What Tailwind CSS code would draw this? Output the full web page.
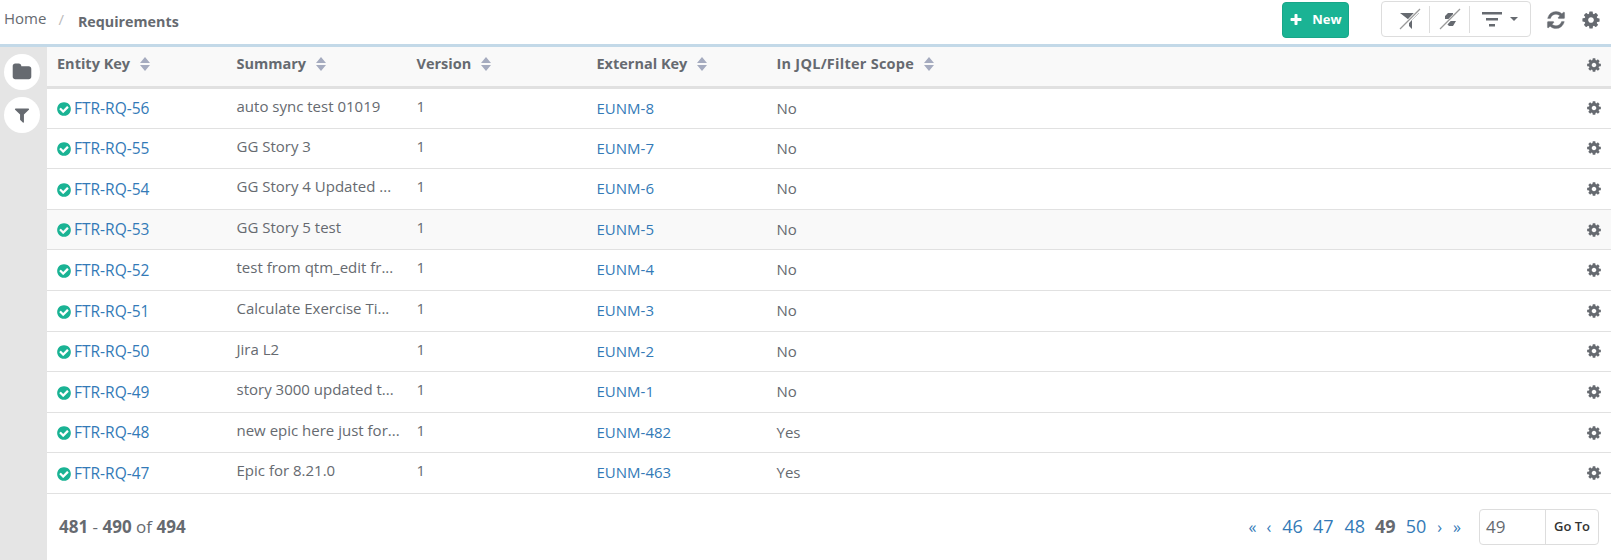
<!DOCTYPE html>
<html lang="en">
<head>
  <meta charset="UTF-8" />
  <title>Requirements</title>
  <script src="https://cdn.jsdelivr.net/npm/@tailwindcss/browser@4"></script>
</head>
<body class="bg-white font-['Open_Sans',sans-serif] text-[#666a70] h-[560px] w-[1619px] overflow-hidden">

  <!-- Breadcrumb + toolbar -->
  <div class="h-[44px] mr-2 flex items-center">
    <span class="ml-1 -mt-[7px] text-[15px]">Home</span>
    <span class="ml-3 -mt-[6px] text-[15px] text-[#bbb]">/</span>
    <span class="ml-[14px] -mt-[1px] text-[14.300px] font-bold">Requirements</span>

    <button class="ml-auto h-9 w-[67px] -mt-[4px] rounded bg-[#1ab394] border border-[#18a689] text-white text-[13px] font-bold flex items-center justify-center gap-[9px]">
      <svg class="w-[14px] h-[14px]" viewBox="0 0 1792 1792" fill="currentColor"><path d="M1600 736v192q0 40-28 68t-68 28h-416v416q0 40-28 68t-68 28h-192q-40 0-68-28t-28-68v-416h-416q-40 0-68-28t-28-68v-192q0-40 28-68t68-28h416v-416q0-40 28-68t68-28h192q40 0 68 28t28 68v416h416q40 0 68 28t28 68z"/></svg>
      New
    </button>

    <div class="ml-8 -mt-[6px] h-[36px] w-[150px] border border-[#ddd] rounded flex items-center">
      <div class="w-[48px] flex justify-end pr-[8px] border-r border-[#ddd] h-[27px] items-center">
        <svg class="w-[22px] h-[22px]" viewBox="0 0 22 22"><path d="M1 5h19l-7 7v9l-3-3v-6z" fill="#666a70"/><path d="M2 21L21 1" stroke="#fff" stroke-width="3.500"/><path d="M1 21L21 1" stroke="#999" stroke-width="1.200"/></svg>
      </div>
      <div class="w-[40px] flex justify-center border-r border-[#ddd] h-[27px] items-center">
        <svg class="w-[22px] h-[22px]" viewBox="0 0 22 22"><path d="M6 8l3-3h5v3l-2 3h-6zM8 13h9l-3 5h-4l-2-2z" fill="#666a70"/><path d="M2 21L21 1" stroke="#fff" stroke-width="3"/><path d="M1 21L21 1" stroke="#999" stroke-width="1.200"/></svg>
      </div>
      <div class="flex-1 flex items-center justify-center gap-2">
        <svg class="w-5 h-[15px]" viewBox="0 0 20 15" fill="#666a70"><path d="M0 0h20v2.500h-20zM4 6h12v2.500h-12zM7 12h6v2.500h-6z"/></svg>
        <span class="w-0 h-0 border-x-[4px] border-x-transparent border-t-[4px] border-t-[#666a70]"></span>
      </div>
    </div>

    <svg class="ml-[15px] -mt-[4px] w-[20px] h-[20px]" viewBox="0 0 1792 1792" fill="#666a70" stroke="#666a70" stroke-width="30"><path d="M1639 1056q0 5-1 7-64 268-268 434.500t-478 166.500q-146 0-282.500-55t-243.500-157l-129 129q-19 19-45 19t-45-19-19-45v-448q0-26 19-45t45-19h448q26 0 45 19t19 45-19 45l-137 137q71 66 161 102t187 36q134 0 250-65t186-179q11-17 53-117 8-23 30-23h192q13 0 22.500 9.500t9.500 22.500zm25-800v448q0 26-19 45t-45 19h-448q-26 0-45-19t-19-45 19-45l138-138q-148-137-349-137-134 0-250 65t-186 179q-11 17-53 117-8 23-30 23h-199q-13 0-22.500-9.500t-9.500-22.500v-7q65-268 270-434.500t480-166.500q146 0 284 55.500t245 156.500l130-129q19-19 45-19t45 19 19 45z"/></svg>
    <svg class="ml-[15px] mr-[10px] -mt-[4px] w-[20px] h-[20px]" viewBox="0 0 1792 1792" fill="#666a70"><path d="M1152 896q0-106-75-181t-181-75-181 75-75 181 75 181 181 75 181-75 75-181zm512-109v222q0 12-8 23t-20 13l-185 28q-19 54-39 91 35 50 107 138 10 12 10 25t-9 23q-27 37-99 108t-94 71q-12 0-26-9l-138-108q-44 23-91 38-16 136-29 186-7 28-36 28h-222q-14 0-24.500-8.500t-11.500-21.500l-28-184q-49-16-90-37l-141 107q-10 9-25 9-14 0-25-11-126-114-165-168-7-10-7-23 0-12 8-23 15-21 51-66.500t54-70.500q-27-50-41-99l-183-27q-13-2-21-12.500t-8-23.500v-222q0-12 8-23t19-13l186-28q14-46 39-92-40-57-107-138-10-12-10-24 0-10 9-23 26-36 98.500-107.500t94.500-71.500q13 0 26 10l138 107q44-23 91-38 16-136 29-186 7-28 36-28h222q14 0 24.500 8.500t11.500 21.500l28 184q49 16 90 37l142-107q9-9 24-9 13 0 25 10 129 119 165 170 7 8 7 22 0 12-8 23-15 21-51 66.500t-54 70.500q26 50 41 98l183 28q13 2 21 12.500t8 23.500z"/></svg>
  </div>

  <div class="h-[3px] mr-2 bg-[#c3d9e8]"></div>

  <div class="flex mr-2 h-[513px]">
    <!-- Side rail -->
    <div class="w-[47px] shrink-0 bg-[#e5e5e5] flex flex-col items-center pt-[7px] pr-[3px] gap-[7px]">
      <div class="w-9 h-9 rounded-full bg-white flex items-center justify-center">
        <svg class="w-[20px] h-[20px]" viewBox="0 0 1792 1792" fill="#666a70"><path d="M1728 608v704q0 92-66 158t-158 66h-1216q-92 0-158-66t-66-158v-960q0-92 66-158t158-66h320q92 0 158 66t66 158v32h672q92 0 158 66t66 158z"/></svg>
      </div>
      <div class="w-9 h-9 rounded-full bg-white flex items-center justify-center">
        <svg class="w-[18px] h-[18px]" viewBox="0 0 1792 1792" fill="#666a70"><path d="M1595 295q17 41-14 70l-493 493v742q0 42-39 59-13 5-25 5-27 0-45-19l-256-256q-19-19-19-45v-486l-493-493q-31-29-14-70 17-39 59-39h1280q42 0 59 39z"/></svg>
      </div>
    </div>

    <div class="flex-1 min-w-0">
      <table class="w-full table-fixed border-collapse text-[15px]">
        <thead>
          <tr class="h-[40.500px] bg-[#f9f9f9] border-b-[3px] border-[#e1e1e1] text-left text-[14.500px] font-bold">
            <th class="w-[179.500px] pl-[10px] pb-[5px] font-bold">Entity Key<svg class="inline ml-[10px] w-[10px] h-[14px] align-[-2px]" viewBox="0 0 10 14" fill="#a5abbf"><path d="M5 0l5 6h-10zM5 14l-5-6h10z"/></svg></th>
            <th class="w-[180px] pl-[10px] pb-[5px] font-bold">Summary<svg class="inline ml-[10px] w-[10px] h-[14px] align-[-2px]" viewBox="0 0 10 14" fill="#a5abbf"><path d="M5 0l5 6h-10zM5 14l-5-6h10z"/></svg></th>
            <th class="w-[180px] pl-[10px] pb-[5px] font-bold">Version<svg class="inline ml-[10px] w-[10px] h-[14px] align-[-2px]" viewBox="0 0 10 14" fill="#a5abbf"><path d="M5 0l5 6h-10zM5 14l-5-6h10z"/></svg></th>
            <th class="w-[180px] pl-[10px] pb-[5px] font-bold">External Key<svg class="inline ml-[10px] w-[10px] h-[14px] align-[-2px]" viewBox="0 0 10 14" fill="#a5abbf"><path d="M5 0l5 6h-10zM5 14l-5-6h10z"/></svg></th>
            <th class="pl-[10px] pb-[5px] font-bold tracking-[0.25px]">In JQL/Filter Scope<svg class="inline ml-[10px] w-[10px] h-[14px] align-[-2px]" viewBox="0 0 10 14" fill="#a5abbf"><path d="M5 0l5 6h-10zM5 14l-5-6h10z"/></svg></th>
            <th class="w-[36px] pl-[11px] pb-[3px]"><svg class="w-[16px] h-[16px]" viewBox="0 0 1792 1792" fill="#666a70"><path d="M1152 896q0-106-75-181t-181-75-181 75-75 181 75 181 181 75 181-75 75-181zm512-109v222q0 12-8 23t-20 13l-185 28q-19 54-39 91 35 50 107 138 10 12 10 25t-9 23q-27 37-99 108t-94 71q-12 0-26-9l-138-108q-44 23-91 38-16 136-29 186-7 28-36 28h-222q-14 0-24.500-8.500t-11.500-21.500l-28-184q-49-16-90-37l-141 107q-10 9-25 9-14 0-25-11-126-114-165-168-7-10-7-23 0-12 8-23 15-21 51-66.500t54-70.500q-27-50-41-99l-183-27q-13-2-21-12.500t-8-23.500v-222q0-12 8-23t19-13l186-28q14-46 39-92-40-57-107-138-10-12-10-24 0-10 9-23 26-36 98.500-107.500t94.500-71.500q13 0 26 10l138 107q44-23 91-38 16-136 29-186 7-28 36-28h222q14 0 24.500 8.500t11.500 21.500l28 184q49 16 90 37l142-107q9-9 24-9 13 0 25 10 129 119 165 170 7 8 7 22 0 12-8 23-15 21-51 66.500t-54 70.500q26 50 41 98l183 28q13 2 21 12.500t8 23.500z"/></svg></th>
          </tr>
        </thead>
        <tbody id="rows"></tbody>
      </table>

      <!-- Pager -->
      <div class="h-[66px] flex items-center pl-3 pr-[12px]">
        <div class="text-[17px] -mt-[1px]"><b>481</b> - <b>490</b> of <b>494</b></div>
        <div class="ml-auto flex items-center text-[18px] text-[#337ab7]">
          <a class="text-[16px] mr-[10px]">«</a>
          <a class="text-[16px] mr-[11px]">‹</a>
          <a class="mr-[10px]">46</a>
          <a class="mr-[11px]">47</a>
          <a class="mr-[10px]">48</a>
          <b class="mr-[10px] text-[#666a70]">49</b>
          <a class="mr-[11px]">50</a>
          <a class="text-[16px] mr-[11px]">›</a>
          <a class="text-[16px]">»</a>
          <div class="ml-[18px] w-[120px] h-[36px] border border-[#ddd] rounded flex items-center text-[#666a70]">
            <span class="w-[66px] pl-[6px] text-[17px] border-r border-[#ddd] leading-[34px]">49</span>
            <span class="flex-1 text-center text-[13px] font-semibold text-[#333]">Go To</span>
          </div>
        </div>
      </div>
    </div>
  </div>

  <script>
    const rows = [
      ["FTR-RQ-56", "auto sync test 01019", "EUNM-8", "No"],
      ["FTR-RQ-55", "GG Story 3", "EUNM-7", "No"],
      ["FTR-RQ-54", "GG Story 4 Updated ...", "EUNM-6", "No"],
      ["FTR-RQ-53", "GG Story 5 test", "EUNM-5", "No"],
      ["FTR-RQ-52", "test from qtm_edit fr...", "EUNM-4", "No"],
      ["FTR-RQ-51", "Calculate Exercise Ti...", "EUNM-3", "No"],
      ["FTR-RQ-50", "Jira L2", "EUNM-2", "No"],
      ["FTR-RQ-49", "story 3000 updated t...", "EUNM-1", "No"],
      ["FTR-RQ-48", "new epic here just for...", "EUNM-482", "Yes"],
      ["FTR-RQ-47", "Epic for 8.21.0", "EUNM-463", "Yes"],
    ];
    const gear = `<svg class="w-[16px] h-[16px]" viewBox="0 0 1792 1792" fill="#666a70"><path d="M1152 896q0-106-75-181t-181-75-181 75-75 181 75 181 181 75 181-75 75-181zm512-109v222q0 12-8 23t-20 13l-185 28q-19 54-39 91 35 50 107 138 10 12 10 25t-9 23q-27 37-99 108t-94 71q-12 0-26-9l-138-108q-44 23-91 38-16 136-29 186-7 28-36 28h-222q-14 0-24.500-8.500t-11.500-21.500l-28-184q-49-16-90-37l-141 107q-10 9-25 9-14 0-25-11-126-114-165-168-7-10-7-23 0-12 8-23 15-21 51-66.500t54-70.500q-27-50-41-99l-183-27q-13-2-21-12.500t-8-23.500v-222q0-12 8-23t19-13l186-28q14-46 39-92-40-57-107-138-10-12-10-24 0-10 9-23 26-36 98.500-107.500t94.500-71.500q13 0 26 10l138 107q44-23 91-38 16-136 29-186 7-28 36-28h222q14 0 24.500 8.500t11.500 21.500l28 184q49 16 90 37l142-107q9-9 24-9 13 0 25 10 129 119 165 170 7 8 7 22 0 12-8 23-15 21-51 66.500t-54 70.500q26 50 41 98l183 28q13 2 21 12.500t8 23.500z"/></svg>`;
    const check = `<svg class="inline w-[16px] h-[16px] mr-[2px] align-[-3px]" viewBox="0 0 1792 1792" fill="#1ab394"><path d="M1412 734q0-28-18-46l-91-90q-19-19-45-19t-45 19l-408 407-226-226q-19-19-45-19t-45 19l-91 90q-18 18-18 46 0 27 18 45l362 362q19 19 45 19 27 0 46-19l543-543q18-18 18-45zm252 162q0 209-103 385.500t-279.500 279.500-385.500 103-385.500-103-279.500-279.500-103-385.500 103-385.500 279.500-279.500 385.500-103 385.500 103 279.500 279.500 103 385.500z"/></svg>`;
    document.getElementById("rows").innerHTML = rows.map((r, i) => `
      <tr class="h-[40.600px] border-b border-[#e1e1e1] ${i === 3 ? "bg-[#f9f9f9]" : ""}">
        <td class="pl-[9px] pt-[1px] text-[15.500px] text-[#337ab7] whitespace-nowrap">${check}${r[0]}</td>
        <td class="pl-[10px] pb-[5px] whitespace-nowrap">${r[1]}</td>
        <td class="pl-[10px] pb-[5px]">1</td>
        <td class="pl-[10px] pb-[1px] text-[#337ab7]">${r[2]}</td>
        <td class="pl-[10px] pb-[1px]">${r[3]}</td>
        <td class="pl-[11px]">${gear}</td>
      </tr>`).join("");
  </script>
</body>
</html>
